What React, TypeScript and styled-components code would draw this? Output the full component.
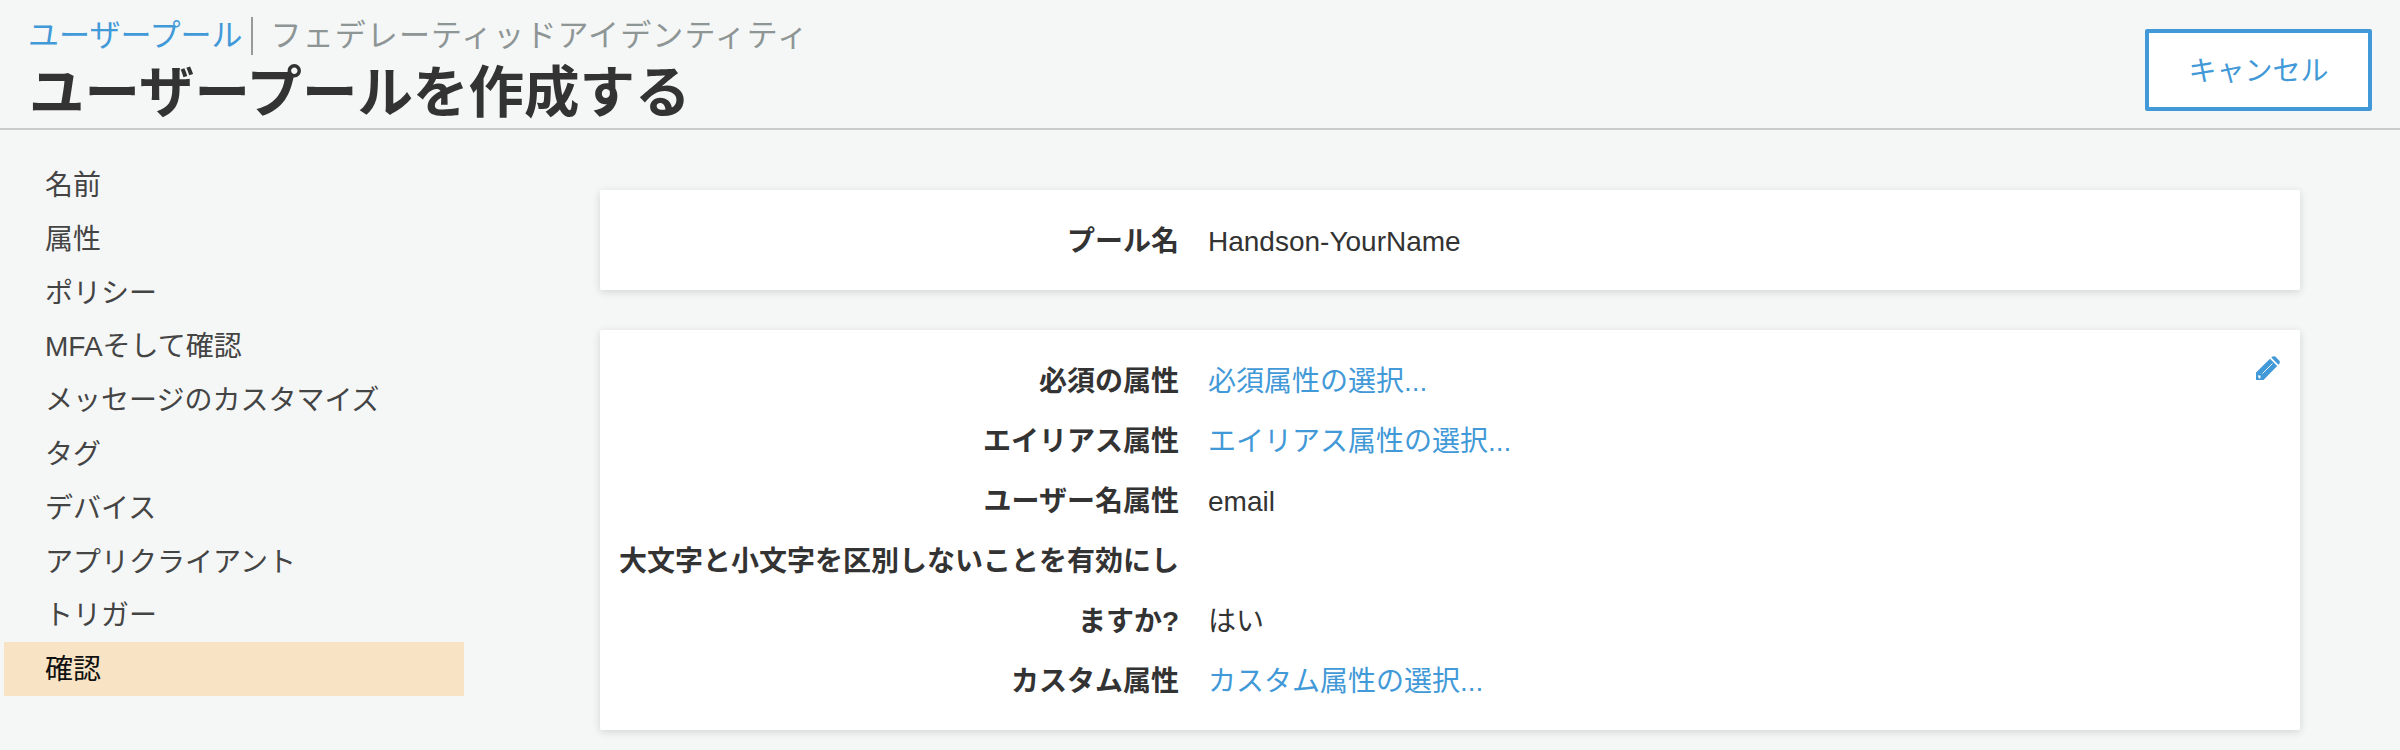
import React from "react";
import styled, { createGlobalStyle } from "styled-components";

const Global = createGlobalStyle`
  html, body { margin: 0; padding: 0; background: #f5f7f7; }
  body { font-family: "Liberation Sans", "Noto Sans CJK JP", sans-serif; }
`;
const Page = styled.div`
  width: 2400px;
  height: 750px;
  overflow: hidden;
  background: #f5f7f7;
  color: #333;
`;
const Header = styled.header`
  box-sizing: border-box;
  height: 130px;
  border-bottom: 2px solid #ccc;
  display: flex;
  justify-content: space-between;
  padding: 17px 28px 0 28px;
`;
const Titles = styled.div`
  display: flex;
  flex-direction: column;
`;
const Crumbs = styled.div`
  display: flex;
  align-items: center;
  height: 38px;
  font-size: 31px;
  line-height: 38px;
`;
const CrumbActive = styled.span`
  color: #4299d7;
  padding-right: 8px;
  border-right: 2px solid #999;
`;
const CrumbMuted = styled.span`
  color: #8e9595;
  padding-left: 18px;
  letter-spacing: 1.1px;
`;
const Title = styled.h1`
  margin: 7px 0 0 1px;
  font-size: 55.5px;
  line-height: 62px;
  font-weight: 700;
  color: #333;
`;
const CancelButton = styled.button`
  box-sizing: border-box;
  width: 227px;
  height: 82px;
  margin-top: 12px;
  padding: 0 0 2px;
  background: #fff;
  border: 4px solid #4299d7;
  border-radius: 2px;
  color: #4299d7;
  font: inherit;
  font-size: 28px;
`;
const Body = styled.div`
  display: flex;
`;
const Sidebar = styled.nav`
  width: 600px;
  flex: none;
  padding: 28px 136px 0 4px;
  box-sizing: border-box;
`;
const NavItem = styled.div<{ $active?: boolean }>`
  height: 53.8px;
  line-height: 56px;
  padding-left: 41px;
  font-size: 28px;
  color: ${(p) => (p.$active ? "#111" : "#444")};
  background: ${(p) => (p.$active ? "#f8e4c4" : "transparent")};
`;
const Main = styled.main`
  flex: 1;
  padding: 60px 100px 0 0;
  display: flex;
  flex-direction: column;
  gap: 40px;
`;
const Card = styled.section`
  position: relative;
  background: #fff;
  border-radius: 2px;
  padding: 22px 0 18px;
  box-shadow: 0 2px 8px rgba(0, 0, 0, 0.14);
`;
const Row = styled.div`
  display: grid;
  grid-template-columns: 579px 1fr;
  column-gap: 29px;
  align-items: end;
  font-size: 28px;
  line-height: 60px;
`;
const Label = styled.div`
  padding-left: 17px;
  text-align: right;
  font-weight: 700;
  color: #333;
`;
const Value = styled.div`
  color: #333;
`;
const LinkValue = styled.a`
  color: #4299d7;
  text-decoration: none;
`;
const EditIcon = styled.svg`
  position: absolute;
  top: 26px;
  right: 20px;
  width: 24px;
  height: 24px;
`;

const nav = ["名前", "属性", "ポリシー", "MFAそして確認", "メッセージのカスタマイズ", "タグ", "デバイス", "アプリクライアント", "トリガー"];

export default function App() {
  return (
    <Page>
      <Global />
      <Header>
        <Titles>
          <Crumbs>
            <CrumbActive>ユーザープール</CrumbActive>
            <CrumbMuted>フェデレーティッドアイデンティティ</CrumbMuted>
          </Crumbs>
          <Title>ユーザープールを作成する</Title>
        </Titles>
        <CancelButton>キャンセル</CancelButton>
      </Header>
      <Body>
        <Sidebar>
          {nav.map((n) => (
            <NavItem key={n}>{n}</NavItem>
          ))}
          <NavItem $active>確認</NavItem>
        </Sidebar>
        <Main>
          <Card>
            <Row>
              <Label>プール名</Label>
              <Value>Handson-YourName</Value>
            </Row>
          </Card>
          <Card>
            <EditIcon viewBox="0 0 24 24">
              <path d="M0 24 L0 16.5 L14 2.8 L21.2 10 L7.5 24 Z" fill="#4299d7" />
              <path d="M15.3 1.6 L16.5 0.6 Q18 -0.3 19.3 0.6 L23.4 4.7 Q24.3 6 23.4 7.5 L22.4 8.7 Z" fill="#4299d7" />
              <path d="M6.5 17.5 L16.5 7.5" stroke="#fff" strokeWidth="0.9" />
              <path d="M1.8 19.5 L4.5 19.5 L4.5 22.2 L3 22.6 Z" fill="#fff" />
            </EditIcon>
            <Row>
              <Label>必須の属性</Label>
              <Value>
                <LinkValue>必須属性の選択...</LinkValue>
              </Value>
            </Row>
            <Row>
              <Label>エイリアス属性</Label>
              <Value>
                <LinkValue>エイリアス属性の選択...</LinkValue>
              </Value>
            </Row>
            <Row>
              <Label>ユーザー名属性</Label>
              <Value>email</Value>
            </Row>
            <Row>
              <Label>大文字と小文字を区別しないことを有効にしますか?</Label>
              <Value>はい</Value>
            </Row>
            <Row>
              <Label>カスタム属性</Label>
              <Value>
                <LinkValue>カスタム属性の選択...</LinkValue>
              </Value>
            </Row>
          </Card>
        </Main>
      </Body>
    </Page>
  );
}
